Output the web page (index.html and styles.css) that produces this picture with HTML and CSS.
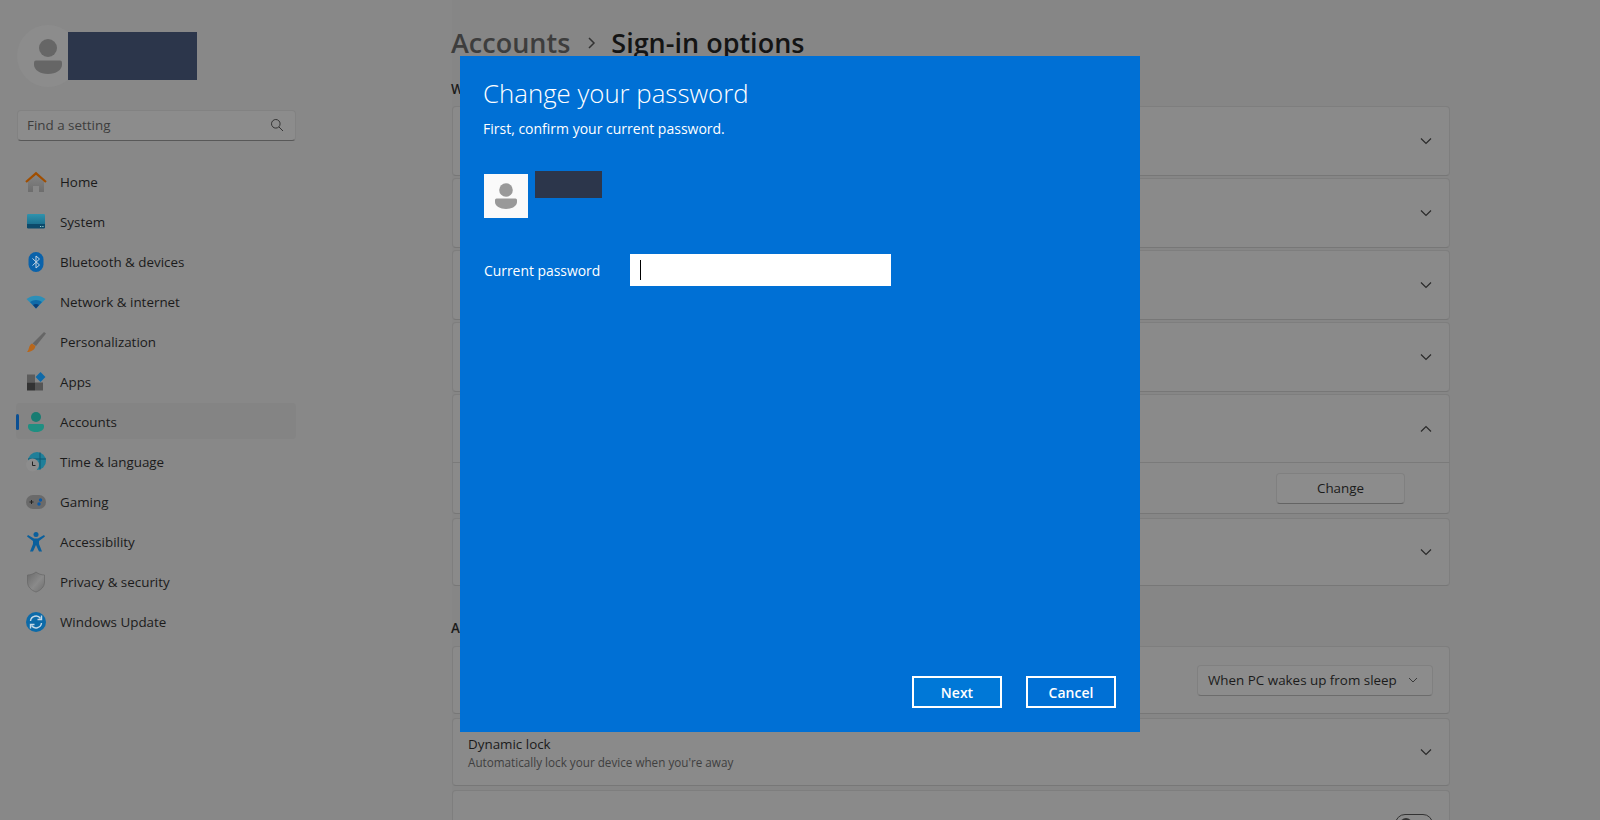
FILE: index.html
```html
<!DOCTYPE html>
<html lang="en">
<head>
<meta charset="utf-8">
<title>Settings - Sign-in options</title>
<link rel="stylesheet" href="styles.css">
</head>
<body>
<div class="app">
  <aside class="sidebar">
    <div class="profile">
      <div class="avatar">
        <svg width="30" height="35" viewBox="0 0 30 35"><circle cx="15" cy="9" r="9" fill="#666"/><path d="M1 23.500q0-2 2-2h24q2 0 2 2v2c0 5.500-6 9.500-14 9.500S1 31 1 25.500z" fill="#666"/></svg>
      </div>
      <div class="redact-name"></div>
    </div>
    <div class="search">
      <span>Find a setting</span>
      <svg width="14" height="14" viewBox="0 0 14 14" fill="none" stroke="#333" stroke-width="1"><circle cx="5.800" cy="5.800" r="4.300"/><path d="M9 9l4 4"/></svg>
    </div>
    <nav class="nav">
      <div class="nav-item"><svg class="ico" viewBox="0 0 22 22"><defs><linearGradient id="gh" x1="0" y1="0" x2="0" y2="1"><stop offset="0" stop-color="#858585"/><stop offset="1" stop-color="#6d6d6d"/></linearGradient></defs><path d="M3 10.500l8-7 8 7V21h-5v-6H8v6H3z" fill="url(#gh)"/><path d="M1 11L11 2.300 21 11" fill="none" stroke="#a04e00" stroke-width="2.200"/></svg><span>Home</span></div>
      <div class="nav-item"><svg class="ico" viewBox="0 0 22 22"><defs><linearGradient id="gs" x1="0" y1="0" x2="0" y2="1"><stop offset="0" stop-color="#2f93ad"/><stop offset="0.700" stop-color="#1c7190"/><stop offset="0.720" stop-color="#0c4a6b"/><stop offset="1" stop-color="#0c4a6b"/></linearGradient></defs><rect x="2" y="3" width="18" height="14.500" rx="1.200" fill="url(#gs)"/><path d="M15 15.500h1.200M17.300 15.500h1.200" stroke="#9cc" stroke-width="1"/></svg><span>System</span></div>
      <div class="nav-item"><svg class="ico" viewBox="0 0 22 22"><rect x="3.500" y="1" width="15" height="20" rx="7.500" fill="#0a62aa"/><path d="M7.500 7.500l7 6.500-3.500 3V5l3.500 3-7 6.500" fill="none" stroke="#c4d4e2" stroke-width="1"/></svg><span>Bluetooth &amp; devices</span></div>
      <div class="nav-item"><svg class="ico" viewBox="0 0 22 22"><path d="M1.500 8C7 3.500 15 3.500 20.500 8L11 17.500z" fill="#2c8fb8"/><path d="M5 11c3.500-2.800 8.500-2.800 12 0l-6 6.500z" fill="#0f6aa8"/><path d="M8 14c1.800-1.300 4.200-1.300 6 0l-3 3.500z" fill="#0b3f78"/></svg><span>Network &amp; internet</span></div>
      <div class="nav-item"><svg class="ico" viewBox="0 0 22 22"><path d="M19 1l2 1.500L11 15l-3.500-2.500z" fill="#666"/><path d="M7 12.500l3.500 2.500c-.5 3.500-4 6-8.500 6 2.500-2 1.500-7 5-8.500z" fill="#b8671c"/></svg><span>Personalization</span></div>
      <div class="nav-item"><svg class="ico" viewBox="0 0 22 22"><rect x="2" y="3.500" width="8" height="8" fill="#5c5c5c"/><rect x="2" y="11.500" width="8" height="8" fill="#333"/><rect x="10" y="11.500" width="8" height="8" fill="#555"/><rect x="12" y="2.500" width="7" height="7" transform="rotate(45 15.500 6)" fill="#0f6aa8"/></svg><span>Apps</span></div>
      <div class="nav-item active"><i class="marker"></i><svg class="ico" viewBox="0 0 22 22"><circle cx="11" cy="6" r="5" fill="#187c72"/><path d="M3 14.500q0-1.500 1.500-1.500h13q1.500 0 1.500 1.500V16c0 3-4 5-8 5s-8-2-8-5z" fill="#1f8f82"/></svg><span>Accounts</span></div>
      <div class="nav-item"><svg class="ico" viewBox="0 0 22 22"><circle cx="12" cy="10" r="9" fill="#1f7f99"/><path d="M15 1.500v17M3 8h18" stroke="#0c5670" stroke-width="1"/><circle cx="7.500" cy="14" r="6.500" fill="#8d8d8d"/><path d="M7.500 10.500V14.500h3" fill="none" stroke="#222" stroke-width="1"/></svg><span>Time &amp; language</span></div>
      <div class="nav-item"><svg class="ico" viewBox="0 0 22 22"><rect x="1" y="4" width="20" height="14" rx="7" fill="#6a6a6a"/><path d="M4.500 11h4M6.500 9v4" stroke="#222" stroke-width="1"/><circle cx="15.500" cy="9" r="1.700" fill="#0a5aa8"/><circle cx="14" cy="13" r="1.700" fill="#0a5aa8"/></svg><span>Gaming</span></div>
      <div class="nav-item"><svg class="ico" viewBox="0 0 22 22"><circle cx="11" cy="3.500" r="2.500" fill="#0a5f9c"/><path d="M2 5.500l1-1.500 6 3.500h4l6-3.500 1 1.500-6 4.500v3l3 7.500h-3L11 14l-3 6.500H5l3-7.500v-3z" fill="#0a5f9c"/></svg><span>Accessibility</span></div>
      <div class="nav-item"><svg class="ico" viewBox="0 0 22 22"><defs><linearGradient id="gp" x1="0" y1="0" x2="1" y2="1"><stop offset="0" stop-color="#6a6a6a"/><stop offset="0.550" stop-color="#8a8a8a"/><stop offset="1" stop-color="#6e6e6e"/></linearGradient></defs><path d="M11 1c2.500 2 5.500 3 8.500 3v7c0 5-4 8.500-8.500 10C6.500 19.500 2.500 16 2.500 11V4C5.500 4 8.500 3 11 1z" fill="url(#gp)" stroke="#666" stroke-width=".7"/></svg><span>Privacy &amp; security</span></div>
      <div class="nav-item"><svg class="ico" viewBox="0 0 22 22"><circle cx="11" cy="11" r="10" fill="#0c6aa8"/><path d="M5.500 10a5.500 5.500 0 0 1 10-2.500M16.500 12a5.500 5.500 0 0 1-10 2.500" fill="none" stroke="#c4d8e6" stroke-width="1.400"/><path d="M16.500 4.500v4h-4M5.500 17.500v-4h4" fill="none" stroke="#c4d8e6" stroke-width="1.400"/></svg><span>Windows Update</span></div>
    </nav>
  </aside>
  <main class="main">
    <h1 class="crumbs"><span class="crumb-parent">Accounts</span><svg class="crumb-sep" width="10" height="14" viewBox="0 0 10 14" fill="none" stroke="#333" stroke-width="1.500"><path d="M2 2l5 5-5 5"/></svg><span>Sign-in options</span></h1>
    <h2 class="section-title">Ways to sign in</h2>
    <section class="cards cards-tight">
      <div class="card"><svg class="chev" viewBox="0 0 12 8"><path d="M1 1.500l5 5 5-5"/></svg></div>
      <div class="card"><svg class="chev" viewBox="0 0 12 8"><path d="M1 1.500l5 5 5-5"/></svg></div>
      <div class="card"><svg class="chev" viewBox="0 0 12 8"><path d="M1 1.500l5 5 5-5"/></svg></div>
      <div class="card"><svg class="chev" viewBox="0 0 12 8"><path d="M1 1.500l5 5 5-5"/></svg></div>
      <div class="card-group">
        <div class="card card-open"><svg class="chev" viewBox="0 0 12 8"><path d="M1 6.500l5-5 5 5"/></svg></div>
        <div class="card-sub"><button class="btn">Change</button></div>
      </div>
      <div class="card card-last"><svg class="chev" viewBox="0 0 12 8"><path d="M1 1.500l5 5 5-5"/></svg></div>
    </section>
    <h2 class="section-title section-two">Additional settings</h2>
    <section class="cards">
      <div class="card"><div class="select"><span>When PC wakes up from sleep</span><svg class="chev-small" viewBox="0 0 10 6"><path d="M1 1l4 4 4-4"/></svg></div></div>
      <div class="card card-text">
        <div class="card-copy"><div class="card-title">Dynamic lock</div><div class="card-sub-title">Automatically lock your device when you're away</div></div>
        <svg class="chev" viewBox="0 0 12 8"><path d="M1 1.500l5 5 5-5"/></svg>
      </div>
      <div class="card"><div class="toggle"><i></i></div></div>
    </section>
  </main>
</div>
<div class="scrim">
  <div class="dialog">
    <div class="dialog-title">Change your password</div>
    <div class="dialog-sub">First, confirm your current password.</div>
    <div class="user-row">
      <div class="user-pic"><svg width="24" height="27" viewBox="0 0 24 27"><circle cx="12" cy="7" r="6.800" fill="#999"/><path d="M1 17q0-1.500 1.500-1.500h19Q23 15.500 23 17v2c0 4-5 7-11 7S1 23 1 19z" fill="#999"/></svg></div>
      <div class="redact-user"></div>
    </div>
    <div class="field-row">
      <label class="field-label">Current password</label>
      <div class="field"><i class="caret"></i></div>
    </div>
    <div class="actions">
      <button class="d-btn d-btn-primary">Next</button>
      <button class="d-btn">Cancel</button>
    </div>
  </div>
</div>
</body>
</html>
```
FILE: styles.css
```css
* { box-sizing: border-box; }
html, body { margin: 0; height: 820px; overflow: hidden; }
body { position: relative; background: #868686; color: #1b1b1b; font-family: "Open Sans", "Noto Sans", sans-serif; font-size: 13.4px; }
.app { display: flex; height: 820px; overflow: hidden; }
.sidebar { width: 452px; flex: none; padding: 25px 0 0 17px; background: #888; }
.profile { display: flex; height: 62px; }
.avatar { width: 62px; height: 62px; border-radius: 50%; background: #8c8c8c; display: flex; align-items: center; justify-content: center; flex: none; }
.redact-name { width: 129px; height: 48px; margin: 7px 0 0 -11px; background: #2c364b; position: relative; }
.search { width: 279px; height: 31px; margin-top: 23px; padding: 0 11px 2px 9px; display: flex; align-items: center; justify-content: space-between; background: #8c8c8c; border: 1px solid #828282; border-bottom-color: #585858; border-radius: 4px; color: #3d3d3d; }
.nav { margin-top: 21px; width: 279px; }
.nav-item { position: relative; display: flex; align-items: center; gap: 13px; height: 40px; padding-left: 9px; margin-left: -1px; }
.ico { width: 22px; height: 22px; flex: none; }
.active::before { content: ""; position: absolute; left: 0; top: 1px; width: 280px; height: 36px; background: #848484; border-radius: 4px; }
.active > * { position: relative; }
.active .marker { position: absolute; left: 0; top: 12px; width: 3px; height: 16px; background: #0a4f93; border-radius: 2px; }
.main { width: 998px; flex: none; }
.crumbs { margin: 23px 0 0 -1px; height: 40px; font-size: 27px; font-weight: 600; line-height: 40px; display: flex; align-items: center; color: #141414; white-space: nowrap; }
.crumb-parent { color: #3d3d3d; }
.crumb-sep { margin: 0 14px 0 17px; }
.section-title { margin: 17px 0 0 -1px; font-size: 13.4px; font-weight: 600; line-height: 18px; height: 19px; }
.section-two { margin-top: 33px; height: 20px; }
.cards { margin-top: 7px; display: flex; flex-direction: column; gap: 4px; }
.card { height: 68px; background: #8a8a8a; border: 1px solid #7e7e7e; border-bottom-color: #777; border-radius: 4px; display: flex; align-items: center; justify-content: flex-end; padding-right: 17px; }
.cards-tight { gap: 2px; }
.cards-tight .card { height: 70px; }
.cards-tight .card-open { height: 69px; border-radius: 4px 4px 0 0; border-bottom-color: #7a7a7a; }
.cards-tight .card-last { height: 68px; margin-top: 2px; }
.chev { width: 12px; height: 8px; fill: none; stroke: #2a2a2a; stroke-width: 1.200; }
.card-group { display: flex; flex-direction: column; }
.card-sub { height: 51px; background: #8a8a8a; border: 1px solid #7e7e7e; border-top: 0; border-bottom-color: #777; border-radius: 0 0 4px 4px; display: flex; align-items: center; justify-content: flex-end; padding-right: 44px; }
.btn { width: 129px; height: 31px; font: inherit; color: #1b1b1b; background: #8c8c8c; border: 1px solid #808080; border-bottom-color: #646464; border-radius: 4px; }
.select { width: 236px; height: 31px; margin-right: -1px; padding: 0 14px 0 10px; display: flex; align-items: center; justify-content: space-between; background: #8c8c8c; border: 1px solid #808080; border-bottom-color: #6c6c6c; border-radius: 4px; white-space: nowrap; }
.chev-small { width: 10px; height: 6px; fill: none; stroke: #3a3a3a; stroke-width: 1; flex: none; }
.card-text { justify-content: space-between; padding-left: 15px; }
.card-copy { padding-top: 1px; }
.card-title { line-height: 18px; }
.card-sub-title { font-size: 11.700px; line-height: 18px; color: #3f3f3f; }
.toggle { width: 38px; height: 20px; margin-right: -1px; border: 1px solid #333; border-radius: 10px; position: relative; }
.toggle i { position: absolute; left: 4px; top: 3px; width: 12px; height: 12px; border-radius: 50%; background: #333; }
.scrim { position: absolute; inset: 0; }
.dialog { position: absolute; left: 460px; top: 56px; width: 680px; height: 676px; background: #0070d5; color: #fff; padding: 20px 24px 24px 23px; display: flex; flex-direction: column; }
.dialog-title { font-size: 25.800px; font-weight: 300; line-height: 34px; }
.dialog-sub { font-size: 14px; line-height: 18px; margin-top: 10px; }
.user-row { display: flex; margin-top: 33px; }
.user-pic { width: 44px; height: 44px; margin: 3px 0 0 1px; background: #fafafa; display: flex; align-items: center; justify-content: center; }
.redact-user { width: 67px; height: 27px; margin-left: 7px; background: #2c364b; }
.field-row { display: flex; align-items: center; margin-top: 36px; }
.field-label { width: 147px; padding-left: 1px; font-size: 13.900px; }
.field { width: 261px; height: 32px; background: #fff; padding: 6px 0 0 10px; }
.caret { display: block; width: 1px; height: 20px; background: #000; }
.actions { margin-top: auto; display: flex; justify-content: flex-end; gap: 24px; }
.d-btn { width: 90px; height: 32px; font: 600 14px "Open Sans", sans-serif; color: #fff; background: #0070d5; border: 2px solid #fff; }
.d-btn-primary { background: #0078d7; }
```
